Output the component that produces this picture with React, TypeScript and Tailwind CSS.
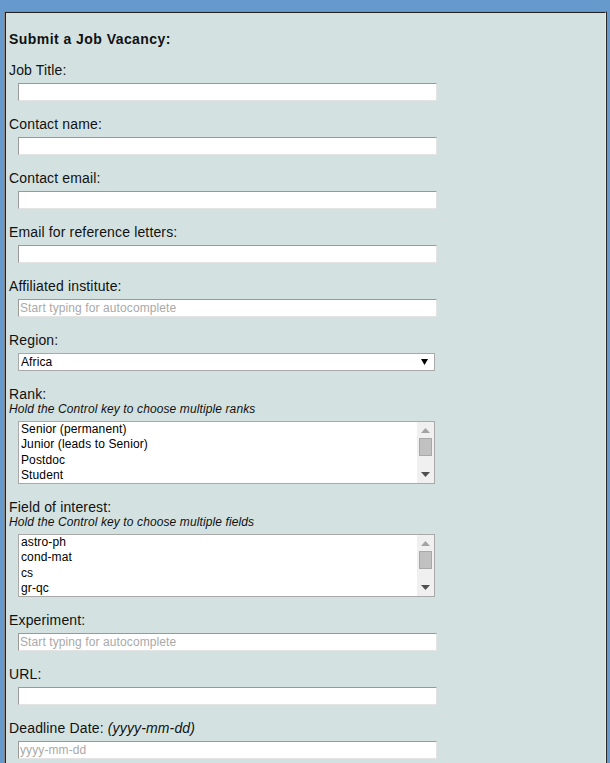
import React from "react";

const font = { fontFamily: '"Liberation Sans", Arial, sans-serif' };

function TextField({ placeholder }: { placeholder?: string }) {
  return (
    <input
      type="text"
      placeholder={placeholder}
      className="ml-[9px] mt-[5px] block h-[18px] w-[419px] border border-t-[#999] border-l-[#999] border-r-[#e3e3e3] border-b-[#e3e3e3] bg-white px-[1px] text-[12px] tracking-[0.1px] text-black outline-none placeholder:text-[#a9a9a9]"
    />
  );
}

function Label({ children }: { children: React.ReactNode }) {
  return <div className="h-[16px] text-[14px] leading-[16px] tracking-[0.15px] text-[#111]">{children}</div>;
}

function Hint({ children }: { children: React.ReactNode }) {
  return <div className="h-[14px] text-[12px] italic leading-[14px] tracking-[0.11px] text-[#111]">{children}</div>;
}

function ListBox({ options }: { options: string[] }) {
  return (
    <div className="ml-[9px] mt-[5px] flex h-[63px] w-[417px] border border-[#a9a9a9] bg-white">
      <div className="flex-1 pl-[2px] text-[12px] leading-[15.3px] tracking-[0.12px] text-black">
        {options.map((o) => (
          <div key={o}>{o}</div>
        ))}
      </div>
      <div className="flex w-[17px] flex-col items-center bg-[#f0f0f0]">
        <svg width="9" height="5" viewBox="0 0 9 5" className="mt-[6px]">
          <path d="M4.5 0 L9 5 L0 5 Z" fill="#a3a3a3" />
        </svg>
        <div className="mt-[5px] h-[18px] w-[13px] border border-[#a8a8a8] bg-[#c1c1c1]" />
        <div className="flex-1" />
        <svg width="9" height="5" viewBox="0 0 9 5" className="mb-[6px]">
          <path d="M0 0 L9 0 L4.5 5 Z" fill="#505050" />
        </svg>
      </div>
    </div>
  );
}

export default function App() {
  return (
    <div className="min-h-[763px] bg-[#6699cc] pl-[4px] pr-[3px] pt-[11px]" style={font}>
      <div className="border border-t-[#888] border-l-[#888] border-r-[#2a2a2a] border-b-[#2a2a2a]">
        <div className="border border-t-[#222] border-l-[#222] border-r-[#e6e6e6] border-b-[#e6e6e6] bg-[#d3e2e1] pb-[40px] pl-[3px] pt-[18px]">
          <div className="h-[16px] text-[14px] font-bold leading-[16px] tracking-[0.45px] text-[#111]">
            Submit a Job Vacancy:
          </div>

          <div className="mt-[15px]">
            <Label>Job Title:</Label>
            <TextField />
          </div>
          <div className="mt-[15px]">
            <Label>Contact name:</Label>
            <TextField />
          </div>
          <div className="mt-[15px]">
            <Label>Contact email:</Label>
            <TextField />
          </div>
          <div className="mt-[15px]">
            <Label>Email for reference letters:</Label>
            <TextField />
          </div>
          <div className="mt-[15px]">
            <Label>Affiliated institute:</Label>
            <TextField placeholder="Start typing for autocomplete" />
          </div>
          <div className="mt-[15px]">
            <Label>Region:</Label>
            <div className="ml-[9px] mt-[5px] flex h-[18px] w-[417px] items-center justify-between border border-[#a9a9a9] bg-white pl-[2px] pr-[6px] text-[12px] tracking-[0.1px] text-black">
              <span>Africa</span>
              <svg width="7" height="6" viewBox="0 0 7 6">
                <path d="M0 0 L7 0 L3.5 6 Z" fill="#000" />
              </svg>
            </div>
          </div>
          <div className="mt-[15px]">
            <Label>Rank:</Label>
            <Hint>Hold the Control key to choose multiple ranks</Hint>
            <ListBox options={["Senior (permanent)", "Junior (leads to Senior)", "Postdoc", "Student"]} />
          </div>
          <div className="mt-[15px]">
            <Label>Field of interest:</Label>
            <Hint>Hold the Control key to choose multiple fields</Hint>
            <ListBox options={["astro-ph", "cond-mat", "cs", "gr-qc"]} />
          </div>
          <div className="mt-[15px]">
            <Label>Experiment:</Label>
            <TextField placeholder="Start typing for autocomplete" />
          </div>
          <div className="mt-[15px]">
            <Label>URL:</Label>
            <TextField />
          </div>
          <div className="mt-[15px]">
            <Label>
              Deadline Date: <i>(yyyy-mm-dd)</i>
            </Label>
            <TextField placeholder="yyyy-mm-dd" />
          </div>
        </div>
      </div>
    </div>
  );
}
